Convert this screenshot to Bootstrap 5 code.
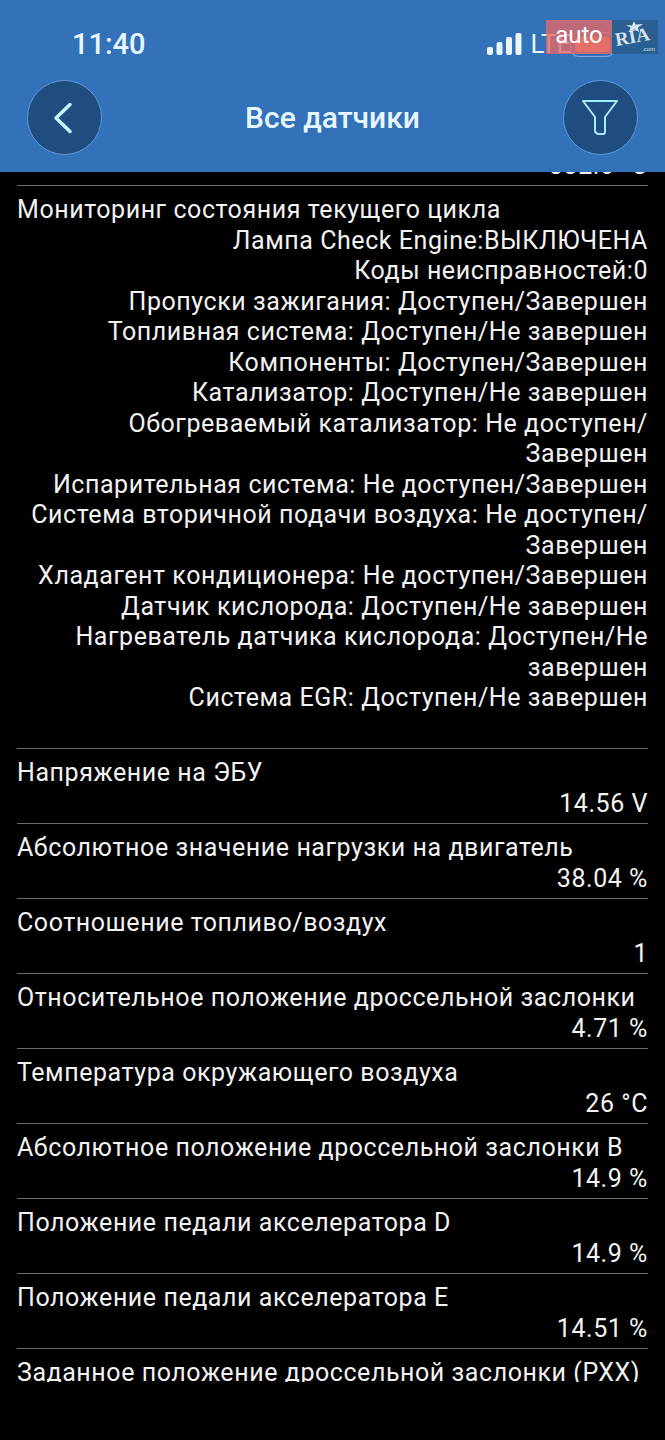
<!DOCTYPE html>
<html lang="ru">

<head>
    <meta charset="utf-8">
    <title>Все датчики</title>
    <link href="https://cdn.jsdelivr.net/npm/bootstrap@5.3.2/dist/css/bootstrap.min.css" rel="stylesheet">
    <style>
        body { background: #000; font-family: Roboto, "Liberation Sans", sans-serif; }
        .phone-top { height: 172px; background: #3371b9; color: #e8f6ff; }
        .status-line { height: 80px; padding: 26px 0 0 72px; }
        .clock { font-size: 29px; line-height: 36px; font-weight: 500; }
        .net-info { margin-left: 341px; gap: 9px; font-size: 26px; line-height: 36px; }
        .title-line { padding: 0 27px; height: 75px; }
        .title-text { font-size: 30px; font-weight: 500; }
        .round-btn { width: 75px; height: 75px; border-radius: 50%; background: #1f4d7f; border: 1px solid #5b9bdc; padding: 0; }
        .sensor-list { height: 1210px; overflow: hidden; color: #f2f2f2; font-size: 25px; line-height: 30.5px; letter-spacing: .56px; padding: 0 17px; }
        .cut-row { height: 13px; padding-bottom: 4px; align-items: flex-end; justify-content: flex-end; overflow: hidden; }
        .sensor-row { border-top: 1px solid #6b6b73; padding: 9px 0 4px; }
        .sensor-row.big-row { padding-bottom: 34.700px; }
        .values-block { text-align: right; }
        .wm-auto { position: absolute; left: 546px; top: 20px; width: 66px; height: 34px; background: rgba(225, 105, 105, .8); color: #fff; font-size: 24px; line-height: 30px; text-align: center; }
        .wm-ria { position: absolute; left: 612px; top: 20px; width: 46px; height: 34px; background: #2a5f91; color: #d8e2ea; }
        .ria-text { position: absolute; left: 3px; top: 7px; font: bold 19px/20px "Liberation Serif", serif; transform: rotate(-10deg); }
        .ria-star { position: absolute; left: 14px; top: 1px; }
        .wm-com { position: absolute; right: 3px; bottom: 1px; font: 6px/7px "Liberation Sans", sans-serif; }
        .batt-glow { position: absolute; left: 575px; top: 37px; width: 35px; height: 15px; border-radius: 4px; background: #f08a6a; box-shadow: 0 0 0 4px #3371b9, 0 0 0 5px #7fa9d6; }
    </style>
</head>

<body>
    <div class="phone-top position-relative">
        <div class="status-line d-flex align-items-start">
            <span class="clock">11:40</span>
            <span class="net-info d-flex align-items-center">
                <svg width="35" height="22" viewBox="0 0 35 22" fill="#e8f6ff">
                    <rect x="0" y="14" width="6" height="8" rx="2"/>
                    <rect x="9.500" y="9" width="6" height="13" rx="2"/>
                    <rect x="19" y="4" width="6" height="18" rx="2"/>
                    <rect x="28.500" y="0" width="6" height="22" rx="2"/>
                </svg>
                <span>LTE</span>
            </span>
        </div>
        <div class="title-line d-flex align-items-center justify-content-between">
            <button class="round-btn d-flex align-items-center justify-content-center" type="button" aria-label="Назад">
                <svg class="me-1" width="20" height="32" viewBox="0 0 20 32" fill="none" stroke="#c4f4ff" stroke-width="3.500" stroke-linecap="round" stroke-linejoin="round"><path d="M17 2.500 3 16l14 13.500"/></svg>
            </button>
            <span class="title-text">Все датчики</span>
            <button class="round-btn d-flex align-items-center justify-content-center" type="button" aria-label="Фильтр">
                <svg width="38" height="37" viewBox="0 0 38 37" fill="none" stroke="#a5ecfb" stroke-width="2" stroke-linejoin="round"><path d="M2 2h34L24 18v15a2 2 0 0 1-2 2h-4a4 4 0 0 1-4-3V18z"/></svg>
            </button>
        </div>
        <div class="batt-glow"></div>
        <div class="wm-auto">auto</div>
        <div class="wm-ria">
            <svg class="ria-star" width="18" height="12" viewBox="0 0 18 12" fill="#d8e2ea"><path d="M8 0l1.500 3.500L17 3l-5 3.500 1 4.500-5-2.500L3 11l1.500-4.500L0 4l6 .5z"/></svg>
            <span class="ria-text">RIA</span>
            <span class="wm-com">.com</span>
        </div>
    </div>

    <div class="sensor-list">
        <div class="cut-row d-flex"><span>332.0 °C</span></div>

        <div class="sensor-row big-row">
            <div>Мониторинг состояния текущего цикла</div>
            <div class="values-block">
                <div>Лампа Check Engine:ВЫКЛЮЧЕНА</div>
                <div>Коды неисправностей:0</div>
                <div>Пропуски зажигания: Доступен/Завершен</div>
                <div>Топливная система: Доступен/Не завершен</div>
                <div>Компоненты: Доступен/Завершен</div>
                <div>Катализатор: Доступен/Не завершен</div>
                <div>Обогреваемый катализатор: Не доступен/<br>Завершен</div>
                <div>Испарительная система: Не доступен/Завершен</div>
                <div>Система вторичной подачи воздуха: Не доступен/<br>Завершен</div>
                <div>Хладагент кондиционера: Не доступен/Завершен</div>
                <div>Датчик кислорода: Доступен/Не завершен</div>
                <div>Нагреватель датчика кислорода: Доступен/Не<br>завершен</div>
                <div>Система EGR: Доступен/Не завершен</div>
            </div>
        </div>

        <div class="sensor-row"><div>Напряжение на ЭБУ</div><div class="values-block">14.56 V</div></div>
        <div class="sensor-row"><div>Абсолютное значение нагрузки на двигатель</div><div class="values-block">38.04 %</div></div>
        <div class="sensor-row"><div>Соотношение топливо/воздух</div><div class="values-block">1</div></div>
        <div class="sensor-row"><div>Относительное положение дроссельной заслонки</div><div class="values-block">4.71 %</div></div>
        <div class="sensor-row"><div>Температура окружающего воздуха</div><div class="values-block">26 °C</div></div>
        <div class="sensor-row"><div>Абсолютное положение дроссельной заслонки B</div><div class="values-block">14.9 %</div></div>
        <div class="sensor-row"><div>Положение педали акселератора D</div><div class="values-block">14.9 %</div></div>
        <div class="sensor-row"><div>Положение педали акселератора E</div><div class="values-block">14.51 %</div></div>
        <div class="sensor-row"><div>Заданное положение дроссельной заслонки (РХХ)</div></div>
    </div>

    <script src="https://cdn.jsdelivr.net/npm/bootstrap@5.3.2/dist/js/bootstrap.bundle.min.js"></script>
</body>

</html>
